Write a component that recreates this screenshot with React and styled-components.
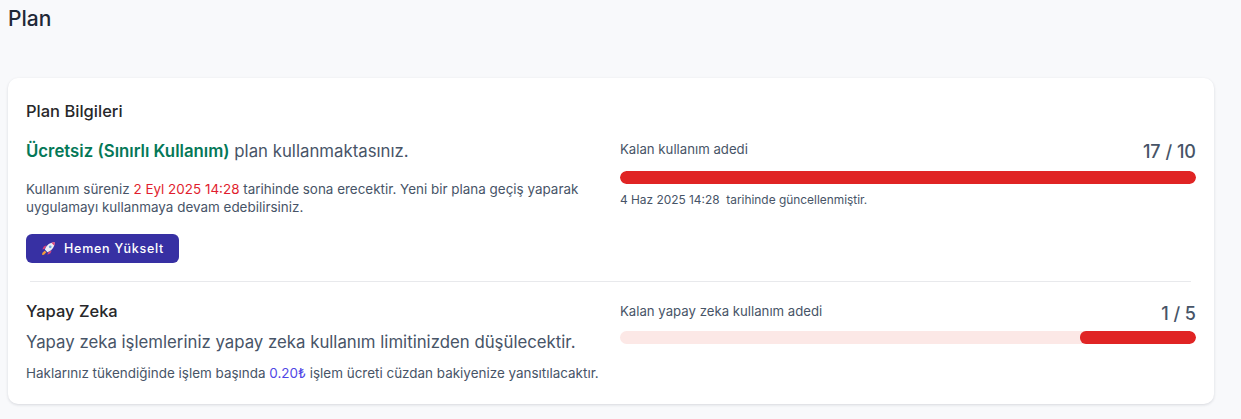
import React from 'react';
import styled, { createGlobalStyle } from 'styled-components';

const GlobalStyle = createGlobalStyle`
  html, body {
    margin: 0;
    padding: 0;
    background: #f8f9fb;
    font-family: Inter, "Noto Sans", sans-serif;
    color: #344054;
  }
`;

const Page = styled.div`
  width: 1241px;
  height: 419px;
  overflow: hidden;
  padding: 4px 27px 0 8px;
  box-sizing: border-box;
`;

const PageTitle = styled.h1`
  margin: 0 0 41px;
  height: 33px;
  font-size: 21px;
  line-height: 30px;
  font-weight: 500;
  color: #1f2937;
`;

const Card = styled.section`
  background: #fff;
  border-radius: 10px;
  box-shadow: 0 1px 3px rgba(16, 24, 40, 0.14);
  height: 326px;
  box-sizing: border-box;
  padding: 23px 18px 0;
`;

const CardTitle = styled.h2`
  margin: 0 0 18px;
  font-size: 16.5px;
  line-height: 20px;
  font-weight: 500;
  color: #27272a;
`;

const Row = styled.div`
  display: grid;
  grid-template-columns: 594px 576px;
`;

const Column = styled.div`
  display: flex;
  flex-direction: column;
  align-items: flex-start;
`;

const Lead = styled.p`
  margin: ${p => p.$top || 0}px 0 0;
  font-size: 16.8px;
  line-height: 24px;
  color: #475467;
`;

const Green = styled.span`
  color: #047857;
  font-weight: 600;
`;

const Small = styled.p`
  margin: ${p => p.$top || 0}px 0 0;
  font-size: 13.45px;
  line-height: 18px;
  width: ${p => p.$width || 'auto'};
  color: #475467;
`;

const Accent = styled.span`
  color: ${p => p.$color};
`;

const UpgradeButton = styled.button`
  display: inline-flex;
  align-items: center;
  gap: 8px;
  margin-top: 18px;
  height: 29px;
  width: 153px;
  padding: 0 0 0 15px;
  border: 0;
  border-radius: 6px;
  background: #3730a3;
  color: #fff;
  font-family: inherit;
  font-size: 12.5px;
  font-weight: 500;
  letter-spacing: 0.75px;
`;

const Divider = styled.hr`
  border: 0;
  border-top: 1px solid #e8e9ec;
  margin: 18px 5px 19px 4px;
`;

const MeterHead = styled.div`
  display: flex;
  justify-content: space-between;
  align-items: center;
  height: 24px;
  width: 100%;
`;

const MeterLabel = styled.span`
  font-size: 13.2px;
  line-height: 18px;
  color: #475467;
  margin-top: -5px;
`;

const MeterValue = styled.span`
  font-size: 18px;
  font-weight: 500;
  color: #475467;
`;

const Track = styled.div`
  width: 100%;
  height: 13px;
  margin-top: ${p => p.$top}px;
  border-radius: 7px;
  background: #fce8e6;
  display: flex;
  justify-content: flex-end;
  overflow: hidden;
`;

const Fill = styled.div`
  height: 100%;
  border-radius: 6px;
  background: #e02424;
`;

const Note = styled.p`
  margin: 7px 0 0;
  font-size: 11.9px;
  line-height: 18px;
  white-space: pre;
  color: #475467;
`;

const SectionTitle = styled.h3`
  margin: 0;
  font-size: 16.5px;
  line-height: 20px;
  font-weight: 500;
  color: #27272a;
`;

const RocketIcon = () => (
  <svg width="15" height="15" viewBox="0 0 14 14" aria-hidden="true">
    <path d="M3.6 7.2 5.2 4 2.6 5.2 1.2 8Z" fill="#e0457b" />
    <path d="M6.8 10.4 10 8.8 8.8 11.4 6 12.8Z" fill="#e0457b" />
    <path d="M3.6 8 C5 4 8 1.4 12.8 1.2 C12.6 6 10 9 6 10.4Z" fill="#eceef6" />
    <path d="M9.6 1.6 C11 1.3 12 1.2 12.8 1.2 C12.8 2.2 12.7 3.4 12.4 4.4Z" fill="#e0457b" />
    <circle cx="8.6" cy="5.4" r="1.3" fill="#6aa5de" />
    <path d="M3.4 9 5 10.6 2.8 12.8 1 13 1.2 11.2Z" fill="#f59e3b" />
  </svg>
);

export default function App() {
  return (
    <Page>
      <GlobalStyle />
      <PageTitle>Plan</PageTitle>
      <Card>
        <CardTitle>Plan Bilgileri</CardTitle>
        <Row>
          <Column>
            <Lead><Green>Ücretsiz (Sınırlı Kullanım)</Green> plan kullanmaktasınız.</Lead>
            <Small $top={17} $width="560px">
              Kullanım süreniz <Accent $color="#e11d2e">2 Eyl 2025 14:28</Accent> tarihinde sona erecektir. Yeni bir plana geçiş yaparak uygulamayı kullanmaya devam edebilirsiniz.
            </Small>
            <UpgradeButton><RocketIcon />Hemen Yükselt</UpgradeButton>
          </Column>
          <Column>
            <MeterHead>
              <MeterLabel>Kalan kullanım adedi</MeterLabel>
              <MeterValue>17 / 10</MeterValue>
            </MeterHead>
            <Track $top={8}><Fill style={{ width: '100%' }} /></Track>
            <Note>4 Haz 2025 14:28  tarihinde güncellenmiştir.</Note>
          </Column>
        </Row>
        <Divider />
        <Row>
          <Column>
            <SectionTitle>Yapay Zeka</SectionTitle>
            <Lead $top={9}>Yapay zeka işlemleriniz yapay zeka kullanım limitinizden düşülecektir.</Lead>
            <Small $top={10}>
              Haklarınız tükendiğinde işlem başında <Accent $color="#4f46e5">0.20₺</Accent> işlem ücreti cüzdan bakiyenize yansıtılacaktır.
            </Small>
          </Column>
          <Column>
            <MeterHead>
              <MeterLabel>Kalan yapay zeka kullanım adedi</MeterLabel>
              <MeterValue>1 / 5</MeterValue>
            </MeterHead>
            <Track $top={6}><Fill style={{ width: '20.2%' }} /></Track>
          </Column>
        </Row>
      </Card>
    </Page>
  );
}
